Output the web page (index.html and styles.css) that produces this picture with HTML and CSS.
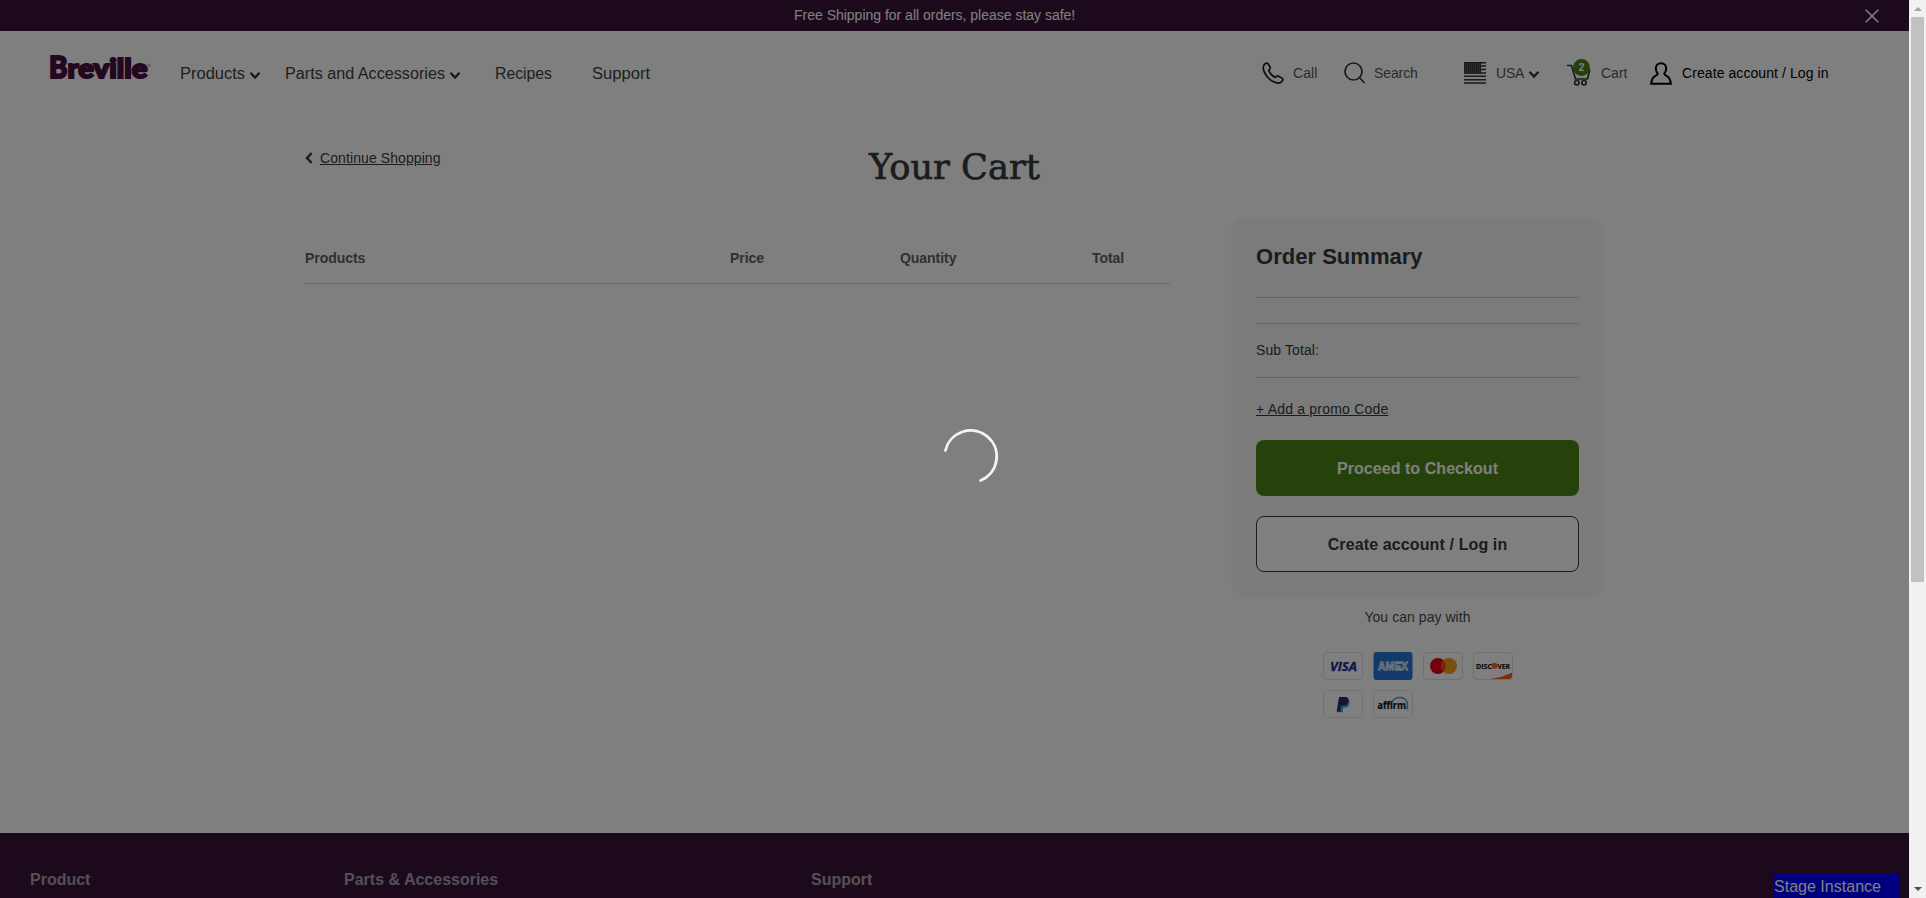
FILE: index.html
```html
<!DOCTYPE html>
<html lang="en">
<head>
<meta charset="utf-8">
<title>Your Cart</title>
<link rel="stylesheet" href="styles.css">
</head>
<body>
<div class="window">
<div class="page">
  <div class="promo">
    <span class="promo-text">Free Shipping for all orders, please stay safe!</span>
    <svg class="close" viewBox="0 0 14 14"><path d="M.7.7l12.600 12.600M13.300.7L.7 13.300"/></svg>
  </div>
  <header class="header">
    <svg class="logo" viewBox="0 0 102 30"><text class="logo-b" x="-1" y="24.300" textLength="18.500" lengthAdjust="spacingAndGlyphs">B</text><text class="logo-rest" x="17.500" y="24.300" textLength="80" lengthAdjust="spacingAndGlyphs">reville</text><circle cx="99" cy="11.500" r="1" class="reg"/></svg>
    <nav class="nav">
      <a class="n1"><svg viewBox="0 0 66 20" width="66" height="20"><text x="0" y="15" textLength="65" lengthAdjust="spacingAndGlyphs">Products</text></svg><svg class="chev" viewBox="0 0 12 9"><path d="M1.500 1.700L6 6.600l4.500-4.900"/></svg></a>
      <a class="n2"><svg viewBox="0 0 161 20" width="161" height="20"><text x="0" y="15" textLength="160" lengthAdjust="spacingAndGlyphs">Parts and Accessories</text></svg><svg class="chev" viewBox="0 0 12 9"><path d="M1.500 1.700L6 6.600l4.500-4.900"/></svg></a>
      <a class="n3"><svg viewBox="0 0 60 20" width="60" height="20"><text x="1" y="15" textLength="57" lengthAdjust="spacingAndGlyphs">Recipes</text></svg></a>
      <a class="n4"><svg viewBox="0 0 60 20" width="60" height="20"><text x="0" y="15" textLength="58" lengthAdjust="spacingAndGlyphs">Support</text></svg></a>
    </nav>
    <div class="tools">
      <svg class="phone" viewBox="0 0 22 22"><path d="M2.200 2.800C3.500.8 5.300.6 6.100 1.900l2 3.400c.7 1.200-.1 1.900-1.400 3 .9 2.700 3.800 5.800 6.700 7.100 1.300-1.300 2.100-2 3.300-1.200l3.500 2.200c1.200.8.8 2.400-1.200 3.800C15 22.900 8 18.700 4.500 13.800 1.200 9.300.4 5.500 2.200 2.800z"/></svg>
      <span class="tool-label call">Call</span>
      <svg class="search" viewBox="0 0 22 22"><circle cx="9.500" cy="9.500" r="8.500"/><path d="M15.500 15.500l5 5.500"/></svg>
      <span class="tool-label srch">Search</span>
      <svg class="flag" viewBox="0 0 22 22"><path class="stripe" d="M0 .7h22M0 4.100h22M0 7.500h22M0 10.900h22M0 14.300h22M0 17.700h22M0 21.100h22"/><path class="canton" d="M0 0h17v11.600H0z"/><path class="stars" d="M1 2h15M1 4h15M1 6h15M1 8h15M1 10h15"/></svg>
      <span class="tool-label usa">USA</span>
      <svg class="chev" viewBox="0 0 12 9"><path d="M1.500 1.700L6 6.600l4.500-4.900"/></svg>
      <span class="cart"><svg viewBox="0 0 24 22"><path d="M0 1.500h4.500l4 13.500h12l2.300-9.500"/><circle cx="9.800" cy="18.700" r="2.200"/><circle cx="17" cy="18.700" r="2.200"/></svg><b class="badge">2</b></span>
      <span class="tool-label crt">Cart</span>
      <svg class="user" viewBox="0 0 22 23"><path d="M11 1.200c-3.200 0-5.200 2.300-5.200 5.300 0 2.200.6 3.500 1.700 4.700.5 1.400-.4 1.900-2 2.600-2.600 1.200-4 3.500-4.300 7.900h19.600c-.3-4.400-1.700-6.700-4.300-7.900-1.600-.7-2.500-1.200-2-2.600 1.100-1.200 1.700-2.500 1.700-4.700 0-3-2-5.300-5.200-5.300z"/></svg>
      <span class="tool-label account">Create account / Log in</span>
    </div>
  </header>
  <main class="main">
    <div class="title-row">
      <a class="back"><svg viewBox="0 0 8 12"><path d="M6.700 1L2 6l4.700 5"/></svg><u>Continue Shopping</u></a>
      <h1><svg width="174" height="50" viewBox="0 0 174 50"><text x="1" y="37" textLength="171" lengthAdjust="spacingAndGlyphs">Your Cart</text></svg></h1>
    </div>
    <div class="columns">
      <div class="thead"><span>Products</span><span>Price</span><span>Quantity</span><span>Total</span></div>
      <aside class="side">
        <section class="summary">
          <h2>Order Summary</h2>
          <div class="blank"></div>
          <div class="subtotal">Sub Total:</div>
          <a class="code">+ Add a promo Code</a>
          <button class="btn primary">Proceed to Checkout</button>
          <button class="btn outline">Create account / Log in</button>
        </section>
        <p class="pay-title">You can pay with</p>
        <div class="cards">
          <svg class="pay" viewBox="0 0 40 28"><rect class="card" x=".5" y=".5" width="39" height="27" rx="3.500"/><text class="visa" x="7" y="18.500" textLength="27" lengthAdjust="spacingAndGlyphs">VISA</text></svg>
          <svg class="pay" viewBox="0 0 40 28"><rect class="amex-bg" x=".5" y="0" width="39" height="28" rx="3"/><text class="amex" x="5" y="18" textLength="30" lengthAdjust="spacingAndGlyphs">AMEX</text></svg>
          <svg class="pay" viewBox="0 0 40 28"><rect class="card" x=".5" y=".5" width="39" height="27" rx="3.500"/><circle cx="15" cy="14" r="8" fill="#eb001b"/><circle cx="26" cy="14" r="8" fill="#f79e1b"/><path d="M20.500 8.200a8 8 0 0 1 0 11.600 8 8 0 0 1 0-11.600z" fill="#e85a00"/></svg>
          <svg class="pay" viewBox="0 0 40 28"><rect class="card" x=".5" y=".5" width="39" height="27" rx="3.500"/><text class="disc" x="3" y="16.500" textLength="16" lengthAdjust="spacingAndGlyphs">DISC</text><circle cx="21.500" cy="13.800" r="3" fill="#f26122"/><text class="disc" x="24.500" y="16.500" textLength="12.500" lengthAdjust="spacingAndGlyphs">VER</text><path d="M17 27c8-1 15-3 22-6.500V24a3 3 0 0 1-3 3z" fill="#f26122"/></svg>
          <svg class="pay" viewBox="0 0 40 28"><rect class="card" x=".5" y=".5" width="39" height="27" rx="3.500"/><path d="M18.500 9.500h5c3.400 0 3.400 2.600 2.600 5-.7 2.200-2.200 3-4.600 3h-1.200l-.8 4.800h-3.300z" fill="#3d9fd0"/><path d="M16 7h6c3 0 4 1.800 3.300 4.500-.8 3-2.600 4-5.500 4H18l-.8 6.200h-3.500z" fill="#282c68"/></svg>
          <svg class="pay" viewBox="0 0 40 28"><rect class="card" x=".5" y=".5" width="39" height="27" rx="3.500"/><path d="M19 12.500c2.500-7.500 15.500-6.500 15.500 2.500 0 2-.4 3-.4 3.500h-1.600" fill="none" stroke="#31a4cf" stroke-width="1.400"/><text class="affirm" x="4.500" y="19" textLength="28.500" lengthAdjust="spacingAndGlyphs">affirm</text></svg>
        </div>
      </aside>
    </div>
  </main>
  <footer class="footer"><span>Product</span><span>Parts &amp; Accessories</span><span>Support</span></footer>
  <div class="stage"><svg width="108" height="23"><text x="0" y="18" textLength="107" lengthAdjust="spacingAndGlyphs">Stage Instance</text></svg></div>
  <div class="overlay"></div>
  <svg class="spinner" viewBox="0 0 56 56"><path d="M2.400 22.500A26 26 0 1 1 37.600 52.500"/></svg>
</div>
<div class="scrollbar"><i class="up"></i><i class="thumb"></i><i class="down"></i></div>
</div>
</body>
</html>
```
FILE: styles.css
```css
* { box-sizing: border-box; }
body { margin: 0; overflow: hidden; font-family: "Liberation Sans", Arial, sans-serif; color: #333b3b; font-size: 14px; }
svg { display: block; flex: none; overflow: visible; }
.window { display: flex; width: 1926px; height: 898px; }
.page { position: relative; flex: none; width: 1909px; height: 898px; display: flex; flex-direction: column; background: #fff; overflow: hidden; }
.promo { height: 31px; background: #381438; color: #fff; display: flex; align-items: center; padding-left: 794px; font-size: 14px; letter-spacing: -.01px; white-space: nowrap; }
.promo-text { width: 281px; margin-top: -1px; }
.close { width: 14px; height: 14px; margin-left: 790px; fill: none; stroke: #fff; stroke-width: 1.6; }
.header { height: 104px; display: flex; padding-left: 50px; }
.logo { width: 102px; height: 30px; margin-top: 23px; fill: #47103f; stroke: #47103f; stroke-width: 1.9; font-family: Lato, sans-serif; font-weight: 900; }
.logo-b { font-size: 30px; }
.logo-rest { font-size: 26px; }
.reg { fill: none; stroke: #75556f; stroke-width: .5; }
.nav { display: flex; margin: 32px 0 0 28px; height: 22px; font-size: 16px; fill: #3a4242; }
.nav a { display: flex; align-items: center; }
.n1 { width: 105px; }
.n2 { width: 209px; }
.n3 { width: 98px; }
.n4 { width: 70px; }
.chev { width: 12px; height: 9px; margin: 3px 0 0 3px; fill: none; stroke: #2f3737; stroke-width: 2.2; }
.tools { display: flex; align-items: center; height: 26px; margin: 29px 0 0 600px; white-space: nowrap; }
.tool-label { font-size: 14px; margin-top: -1px; color: #505858; }
.phone { width: 22px; height: 22px; fill: none; stroke: #181c1c; stroke-width: 1.7; }
.call { width: 51px; margin-left: 9px; letter-spacing: .1px; }
.search { width: 22px; height: 22px; fill: none; stroke: #303636; stroke-width: 1.7; }
.srch { width: 89px; margin-left: 8px; letter-spacing: -.1px; }
.flag { width: 22px; height: 22px; margin-left: 1px; }
.stripe { stroke: #303536; stroke-width: 1.5; }
.canton { fill: #303536; }
.stars { stroke: #858585; stroke-width: .8; stroke-dasharray: 1 1; }
.usa { width: 29px; margin-left: 10px; letter-spacing: -.2px; }
.cart { position: relative; width: 24px; margin-left: 27px; height: 22px; }
.cart svg { width: 24px; height: 22px; margin-top: 2px; fill: none; stroke: #303838; stroke-width: 1.7; }
.badge { position: absolute; left: 6px; top: -3px; width: 17px; height: 17px; border-radius: 50%; background: #4d8516; color: #fff; font-size: 10px; line-height: 17px; text-align: center; }
.crt { width: 27px; margin-left: 10px; }
.user { width: 22px; height: 23px; margin-left: 22px; fill: none; stroke: #000; stroke-width: 2; }
.account { color: #000; margin-left: 10px; letter-spacing: .08px; }
.main { height: 698px; padding-left: 305px; }
.title-row { display: flex; height: 83px; }
.back { display: flex; width: 563px; height: 20px; margin-top: 13px; align-items: center; line-height: 20px; }
.back svg { width: 8px; height: 12px; margin-right: 7px; fill: none; stroke: #2f3737; stroke-width: 2.4; }
.back u { text-underline-offset: 1px; letter-spacing: .09px; }
h1 { margin: 7px 0 0; height: 50px; }
h1 text { font: 400 36px "DejaVu Serif", serif; fill: #333b3b; stroke: #333b3b; stroke-width: .7; }
.columns { display: flex; align-items: flex-start; }
.thead { display: grid; grid-template-columns: 425px 170px 192px 78px; width: 865px; height: 66px; padding-top: 32px; border-bottom: 1px solid #d6d6d6; font-weight: 700; font-size: 14px; letter-spacing: -.05px; color: #5a6262; }
.side { width: 373px; margin-left: 61px; }
.summary { height: 379px; border-radius: 16px; background: #f7f7f7; padding: 25px 25px 0; display: flex; flex-direction: column; }
h2 { margin: 0; height: 54px; line-height: 27px; font-size: 22px; letter-spacing: .02px; }
.blank { height: 27px; flex: none; border: 1px solid #cdcdcd; border-width: 1px 0; margin-bottom: 14px; }
.subtotal { height: 40px; padding-top: 4px; border-bottom: 1px solid #cdcdcd; letter-spacing: .1px; }
.code { margin-top: 22px; height: 40px; line-height: 18px; text-decoration: underline; letter-spacing: .2px; }
.btn { height: 56px; flex: none; border-radius: 8px; padding: 2px 6px 0; font: 700 16px "Liberation Sans", Arial, sans-serif; letter-spacing: .06px; }
.primary { background: #4d8516; color: #fff; border: 0; }
.outline { margin-top: 20px; background: #fff; color: #333b3b; border: 1px solid #333b3b; letter-spacing: .12px; }
.pay-title { margin: 11px 0 0; height: 44px; text-align: center; line-height: 18px; color: #454d4d; letter-spacing: .05px; }
.cards { display: grid; grid-template-columns: repeat(4, 40px); column-gap: 10px; row-gap: 10px; margin-left: 92px; }
.pay { width: 40px; height: 28px; }
.card { fill: #fff; stroke: #e0e0e0; }
.visa { font: italic 700 13px "Open Sans", sans-serif; fill: #1d2b8f; stroke: #1d2b8f; stroke-width: .3; }
.amex-bg { fill: #2675d1; }
.amex { font: 700 11px "Liberation Sans", sans-serif; fill: #2675d1; stroke: #fff; stroke-width: .8; }
.disc { font: 700 7.500px "Open Sans", sans-serif; fill: #17171f; stroke: #17171f; stroke-width: .2; }
.affirm { font: 700 10.500px "Open Sans", sans-serif; fill: #111; stroke: #111; stroke-width: .2; }
.footer { height: 65px; flex: none; padding: 38px 0 0 30px; display: grid; grid-template-columns: 314px 467px 200px; background: #381438; color: #aaa0aa; font-weight: 700; font-size: 16px; }
.stage { position: absolute; left: 1774px; bottom: 0; width: 125px; height: 24px; background: #0000ff; font-size: 16px; }
.stage text { fill: #fff; }
.overlay { position: absolute; inset: 0; background: rgba(0, 0, 0, .5); }
.spinner { position: absolute; left: 943px; top: 428px; width: 56px; height: 56px; fill: none; stroke: #f4f4f4; stroke-width: 2.8; stroke-linecap: round; }
.scrollbar { width: 17px; height: 898px; background: #f1f1f1; display: flex; flex-direction: column; align-items: center; }
.up { margin-top: 7px; border: 4px solid transparent; border-top: 0; border-bottom: 4px solid #a3a3a3; }
.thumb { width: 13px; height: 565px; margin-top: 6px; background: #c1c1c1; }
.down { margin-top: auto; margin-bottom: 7px; border: 4px solid transparent; border-bottom: 0; border-top: 4px solid #505050; }
```
